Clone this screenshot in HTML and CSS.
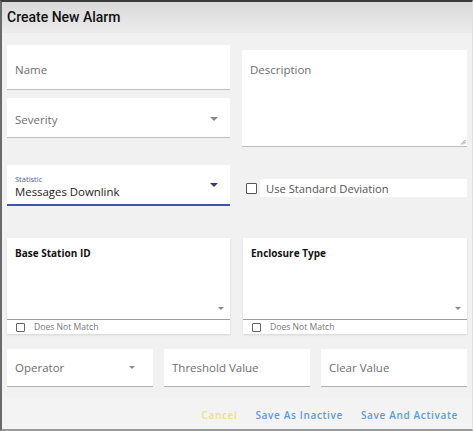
FILE: index.html
```html
<!DOCTYPE html>
<html>
<head>
<meta charset="utf-8">
<link rel="stylesheet" href="styles.css">
</head>
<body>
<div class="dialog">
  <div class="header">Create New Alarm</div>
  <div class="content">
    <div class="top">
      <div class="col">
        <div class="field name"><span class="ph">Name</span></div>
        <div class="field select severity"><span class="ph">Severity</span><span class="arrow"></span></div>
        <div class="field select statistic active">
          <div class="stack"><span class="float">Statistic</span><span class="value">Messages Downlink</span></div>
          <span class="arrow dark"></span>
        </div>
      </div>
      <div class="col">
        <div class="field desc"><span class="ph">Description</span><span class="grip"><svg width="6" height="6" viewBox="0 0 6 6"><path d="M1 5.5L5.5 1M3 5.5L5.5 3" stroke="#777" stroke-width="0.8"/></svg></span></div>
        <div class="check-row"><span class="box"></span><span class="check-label">Use Standard Deviation</span></div>
      </div>
    </div>
    <div class="cards">
      <div class="card">
        <div class="card-field"><span class="card-title">Base Station ID</span><span class="arrow small"></span></div>
        <div class="match"><span class="box sm"></span><span>Does Not Match</span></div>
      </div>
      <div class="card">
        <div class="card-field"><span class="card-title">Enclosure Type</span><span class="arrow small"></span></div>
        <div class="match"><span class="box sm"></span><span>Does Not Match</span></div>
      </div>
    </div>
    <div class="bottom">
      <div class="field select short"><span class="ph">Operator</span><span class="arrow"></span></div>
      <div class="field short"><span class="ph">Threshold Value</span></div>
      <div class="field short"><span class="ph">Clear Value</span></div>
    </div>
  </div>
  <div class="footer">
    <span class="btn cancel">Cancel</span>
    <span class="btn">Save As Inactive</span>
    <span class="btn">Save And Activate</span>
  </div>
</div>
</body>
</html>
```
FILE: styles.css
```css
html, body { margin: 0; padding: 0; }
body { width: 473px; height: 431px; overflow: hidden; background: #f2f2f2; font-family: "Open Sans", sans-serif; }
.dialog {
  width: 473px; height: 431px; box-sizing: border-box;
  border-top: 2px solid #3a3a3a; border-left: 2px solid #6a6a6a; border-bottom: 2px solid #9a9a9a; border-right: 1px solid #e0e0e0;
  background: #f1f1f1; display: flex; flex-direction: column;
}
.header {
  height: 31px; box-sizing: border-box; padding: 7px 0 0 5px;
  background: linear-gradient(#d9d9d9, #e6e6e6 70%, #ececec);
  font-family: Roboto, sans-serif; font-size: 14px; font-weight: 500; color: #111; line-height: 17px;
}
.content { padding: 12px 5px 0 5px; flex: 1; }
.top { display: grid; grid-template-columns: 223px 225px; column-gap: 12px; }
.col { display: flex; flex-direction: column; }
.field {
  background: #fff; border-bottom: 1px solid #bdbdbd; box-sizing: border-box;
  display: flex; align-items: center; padding: 0 8px; position: relative;
}
.ph { font-size: 11.5px; color: #6e6e6e; }
.name { height: 45px; padding-top: 4px; }
.severity { height: 40px; margin-top: 8px; padding-top: 3px; }
.statistic { height: 41px; margin-top: 27px; border-bottom: 2px solid #3f51b5; }
.select { justify-content: space-between; }
.arrow { width: 0; height: 0; border-left: 4px solid transparent; border-right: 4px solid transparent; border-top: 4px solid #8a8a8a; margin-right: 4px; }
.arrow.dark { border-top-color: #3b3b6b; }
.stack { display: flex; flex-direction: column; padding-top: 5px; }
.float { font-size: 7.5px; color: #4b55b5; line-height: 9px; }
.value { font-size: 11.4px; color: #222; line-height: 16px; }
.desc { height: 97px; margin-top: 5px; align-items: flex-start; padding-top: 12px; }
.grip { position: absolute; right: 1px; bottom: 1px; line-height: 0; }
.check-row { margin-top: 32px; height: 18px; display: flex; align-items: center; padding-left: 4px; background: linear-gradient(90deg, #f1f1f1 0, #f1f1f1 18px, #fff 18px, #fff 99%); }
.box { width: 9px; height: 9px; border: 1.5px solid #555; border-radius: 1px; background: #fff; box-sizing: content-box; }
.check-label { margin-left: 9px; font-size: 11.2px; color: #555; }
.cards { display: grid; grid-template-columns: 223px 224px; column-gap: 13px; margin-top: 32px; }
.card { background: #fff; box-shadow: 0 1px 2px rgba(0,0,0,0.12); }
.card-field { height: 82px; box-sizing: border-box; border-bottom: 1px solid #9e9e9e; padding: 10px 8px 0 8px; position: relative; font-size: 10px; line-height: 11px; }
.card-title { font-size: 10px; font-weight: 700; color: #111; }
.arrow.small { position: absolute; right: 6px; bottom: 9px; border-left-width: 3.5px; border-right-width: 3.5px; border-top-width: 3.5px; margin: 0; }
.match { height: 14px; display: flex; align-items: center; padding-left: 9px; font-size: 8.6px; color: #777; }
.box.sm { width: 7px; height: 7px; border: 1px solid #666; margin-right: 9px; }
.bottom { display: grid; grid-template-columns: 146px 146px 146px; column-gap: 11px; margin-top: 15px; }
.short { height: 38px; border-bottom: 1px solid #b0b0b0; }
.bottom .select { padding-right: 14px; }
.bottom .select .arrow { border-left-width: 3.5px; border-right-width: 3.5px; border-top-width: 3.5px; }
.footer { height: 32px; display: flex; justify-content: flex-end; align-items: center; padding: 4px 14px 0 0; box-sizing: border-box; gap: 18px; background: #f3f3f3; }
.btn { font-size: 10px; letter-spacing: 0.65px; color: #5a9be0; font-weight: 600; }
.cancel { color: #ebe37a; }
```
